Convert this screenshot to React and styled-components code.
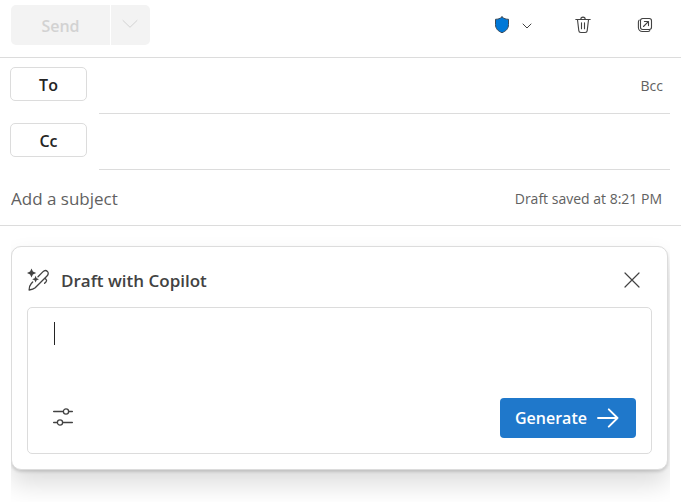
import React from "react";
import styled, { createGlobalStyle, css } from "styled-components";

const GlobalStyle = createGlobalStyle`
  *, *::before, *::after { box-sizing: border-box; }
  body {
    margin: 0;
    background: #fff;
    color: #424242;
    font-family: "Segoe UI", "Open Sans", "Noto Sans", sans-serif;
    font-size: 16px;
  }
  button, input, textarea { font: inherit; color: inherit; }
  button { cursor: pointer; }
  svg { display: block; }
`;

const line = "#dcdcdc";

const Compose = styled.main`
  display: flex;
  flex-direction: column;
`;

const Toolbar = styled.header`
  display: flex;
  align-items: center;
  justify-content: space-between;
  height: 58px;
  padding: 0 23px 8px 11px;
  border-bottom: 1px solid ${line};
`;

const SplitButton = styled.div`
  display: flex;
  gap: 1px;
  border-radius: 5px;
  overflow: hidden;
`;

const SplitPart = styled.button`
  display: flex;
  align-items: center;
  justify-content: center;
  width: ${(p) => p.$width};
  height: 40px;
  padding: ${(p) => p.$pad || "2px 0 0"};
  border: 0;
  background: #f3f3f3;
  color: #d2d2d2;
  font-weight: 600;
  cursor: default;
`;

const ToolbarActions = styled.div`
  display: flex;
  align-items: center;
  gap: 34px;
`;

const IconButton = styled.button`
  display: flex;
  align-items: center;
  gap: 12px;
  padding: ${(p) => p.$pad || "4px"};
  border: 0;
  background: none;
`;

const Field = styled.div`
  display: flex;
  align-items: stretch;
  gap: 12px;
  height: 56px;
  padding: 0 11px 0 10px;
`;

const FieldButton = styled.button`
  align-self: flex-start;
  width: 77px;
  height: 34px;
  margin-top: 9px;
  padding: 1px 0 0;
  border: 1px solid ${line};
  border-radius: 5px;
  background: #fff;
  color: #242424;
  font-weight: 600;
  line-height: 30px;
`;

const FieldBody = styled.div`
  display: flex;
  flex: 1;
  align-items: center;
  min-width: 0;
  padding-right: 7px;
  border-bottom: 1px solid ${line};
`;

const plainText = css`
  flex: 1;
  min-width: 0;
  padding: 0;
  border: 0;
  outline: 0;
  background: none;
  &::placeholder { color: #616161; opacity: 1; }
`;

const TextInput = styled.input`${plainText}`;

const SubjectInput = styled(TextInput)`
  font-size: 17px;
`;

const BccButton = styled.button`
  padding: 0;
  border: 0;
  background: none;
  color: #616161;
  font-size: 14px;
`;

const SubjectRow = styled.div`
  display: flex;
  align-items: center;
  height: 56px;
  padding: 1px 19px 0 11px;
  border-bottom: 1px solid ${line};
`;

const SavedNote = styled.span`
  color: #616161;
  font-size: 14px;
`;

const Body = styled.section`
  margin: 0 11px;
  padding: 20px 2px 32px 0;
  overflow: hidden;
`;

const Card = styled.form`
  padding: 15px;
  border: 1px solid ${line};
  border-radius: 10px;
  background: #fff;
  box-shadow: 0 14px 26px rgba(0, 0, 0, 0.14), 0 2px 3px rgba(0, 0, 0, 0.14);
`;

const CardHeader = styled.div`
  display: flex;
  align-items: center;
  gap: 12px;
  height: 45px;
  padding: 0 8px 10px 0;
`;

const CardTitle = styled.h2`
  flex: 1;
  margin: 0;
  font-size: 17px;
  font-weight: 600;
  line-height: 24px;
  padding-top: 2px;
`;

const PromptBox = styled.div`
  display: flex;
  flex-direction: column;
  justify-content: space-between;
  height: 147px;
  padding: 14px 15px 15px 25px;
  border: 1px solid ${line};
  border-radius: 5px;
`;

const PromptLine = styled.div`
  display: flex;
  height: 48px;
  padding-left: 1px;
`;

const Caret = styled.span`
  width: 1px;
  height: 23px;
  background: #242424;
  ${PromptLine}:focus-within & { visibility: hidden; }
`;

const Prompt = styled.textarea`
  ${plainText}
  resize: none;
  line-height: 24px;
`;

const PromptActions = styled.div`
  display: flex;
  align-items: center;
  justify-content: space-between;
`;

const GenerateButton = styled.button`
  display: flex;
  align-items: center;
  justify-content: space-between;
  width: 136px;
  height: 40px;
  padding: 0 17px 0 15px;
  border: 0;
  border-radius: 4px;
  background: #1f78cb;
  color: #fff;
  font-weight: 600;
`;

const Stroke = ({ w, h, width = 1, children }) => (
  <svg width={w} height={h} viewBox={`0 0 ${w} ${h}`} fill="none" stroke="currentColor"
    strokeWidth={width} strokeLinecap="round" strokeLinejoin="round" aria-hidden="true">
    {children}
  </svg>
);

const WideChevron = () => (
  <Stroke w={16} h={10}><path d="M1 1.5 8 8.3 15 1.5" /></Stroke>
);

const SmallChevron = () => (
  <Stroke w={10} h={10}><path d="M1 4 5 8 9 4" /></Stroke>
);

const Shield = () => (
  <Stroke w={16} h={18}>
    <path fill="#0078d7" stroke="#3b4a59"
      d="M8 1C6 2.7 3.8 3.3 1.5 3.3V8.5C1.5 12.7 4.2 15.3 8 16.7 11.8 15.3 14.5 12.7 14.5 8.5V3.3C12.2 3.3 10 2.7 8 1Z" />
  </Stroke>
);

const Trash = () => (
  <Stroke w={16} h={18} width={1.1}>
    <path d="M.8 3.5H15.2M5.8 3.3a2.2 2.2 0 0 1 4.4 0M2.5 3.7 3.8 14.6a2 2 0 0 0 2 1.9h4.4a2 2 0 0 0 2-1.9L13.5 3.7M6.5 6.8v6M9.5 6.8v6" />
  </Stroke>
);

const PopOut = () => (
  <Stroke w={16} h={16} width={1.1}>
    <rect x="3.5" y="1.5" width="11" height="11" rx="2.2" />
    <path d="M2.2 3.2C1.6 3.7 1.4 4.3 1.4 5v5.5a4 4 0 0 0 4 4H11c.8 0 1.4-.3 1.8-.8M6.5 9.5 11.3 4.7M7.4 4.5h4.1v4.1" />
  </Stroke>
);

const MagicPen = () => (
  <Stroke w={22} h={24} width={1.3}>
    <g transform="translate(-1 0)">
      <path fill="currentColor" stroke="none"
        d="M5.5 .4 6.9 3.6 10.2 5 6.9 6.4 5.5 9.6 4.1 6.4 .9 5 4.1 3.6ZM9.6 7.8l1 2.4 2.4 1-2.4 1-1 2.4-1-2.4-2.4-1 2.4-1Z" />
      <path d="M12 8.8 16.8 3.9c1.5-1.5 3.5-1.5 4.6-.5 1.2 1.2 1.1 3.1-.4 4.6L9.2 19.8C7.8 21.1 5.3 21.8 3.1 22c.1-2.3.8-5 2.2-6.5L6.7 14M18.8 10.3l1.4 1.3c.6.7.5 1.4-.1 2.1l-1.5 1.5" />
    </g>
  </Stroke>
);

const Close = () => (
  <Stroke w={16} h={16} width={1.2}><path d="M1 1 15 15M15 1 1 15" /></Stroke>
);

const Sliders = () => (
  <Stroke w={20} h={20} width={1.3}>
    <path d="M.6 3.5H10M16 3.5h3.4M.6 14.5H4M10 14.5h9.4" />
    <circle cx="13" cy="3.5" r="2.6" />
    <circle cx="7" cy="14.5" r="2.6" />
  </Stroke>
);

const Arrow = () => (
  <Stroke w={22} h={20} width={1.9}><path d="M1 10H20.5M11.8 1.3 20.5 10 11.8 18.7" /></Stroke>
);

export default function App() {
  return (
    <>
      <GlobalStyle />
      <Compose>
        <Toolbar>
          <SplitButton>
            <SplitPart $width="99px" disabled>Send</SplitPart>
            <SplitPart $width="39px" $pad="0 2px 2px 0" disabled aria-label="Send options"><WideChevron /></SplitPart>
          </SplitButton>
          <ToolbarActions>
            <IconButton aria-label="Sensitivity" $pad="4px 5px 4px 4px"><Shield /><SmallChevron /></IconButton>
            <IconButton aria-label="Discard"><Trash /></IconButton>
            <IconButton aria-label="Open in new window" $pad="4px 5px 4px 8px"><PopOut /></IconButton>
          </ToolbarActions>
        </Toolbar>

        <Field>
          <FieldButton>To</FieldButton>
          <FieldBody>
            <TextInput aria-label="To" />
            <BccButton>Bcc</BccButton>
          </FieldBody>
        </Field>
        <Field>
          <FieldButton>Cc</FieldButton>
          <FieldBody>
            <TextInput aria-label="Cc" />
          </FieldBody>
        </Field>

        <SubjectRow>
          <SubjectInput aria-label="Subject" placeholder="Add a subject" />
          <SavedNote>Draft saved at 8:21 PM</SavedNote>
        </SubjectRow>

        <Body>
          <Card onSubmit={(e) => e.preventDefault()}>
            <CardHeader>
              <MagicPen />
              <CardTitle>Draft with Copilot</CardTitle>
              <IconButton type="button" aria-label="Close"><Close /></IconButton>
            </CardHeader>
            <PromptBox>
              <PromptLine>
                <Caret />
                <Prompt aria-label="Describe your draft" />
              </PromptLine>
              <PromptActions>
                <IconButton type="button" aria-label="Adjust tone and length" $pad="0"><Sliders /></IconButton>
                <GenerateButton type="submit">Generate<Arrow /></GenerateButton>
              </PromptActions>
            </PromptBox>
          </Card>
        </Body>
      </Compose>
    </>
  );
}
